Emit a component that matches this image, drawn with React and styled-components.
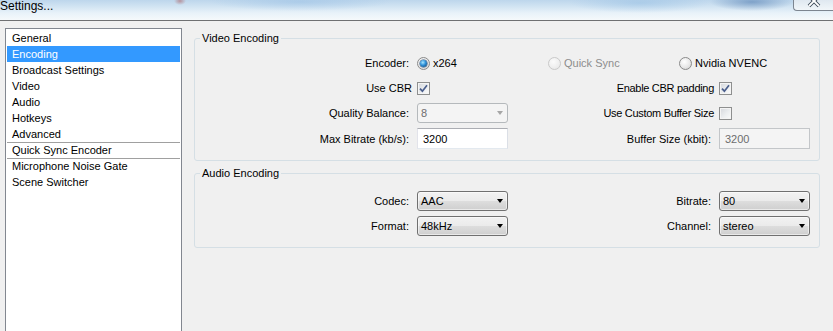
import React from "react";
import styled, { createGlobalStyle, css } from "styled-components";

const Global = createGlobalStyle`
  html, body { margin: 0; padding: 0; background: #f0f0f0; overflow: hidden; }
  body { font-family: "Liberation Sans", Arial, sans-serif; font-size: 11px; color: #000; }
  * { box-sizing: border-box; }
`;

const Window = styled.div`
  width: 833px;
  height: 331px;
  display: flex;
  flex-direction: column;
  background: #f0f0f0;
  overflow: hidden;
`;

const TitleBar = styled.div`
  flex: none;
  height: 21px;
  display: flex;
  align-items: flex-start;
  border-bottom: 1px solid #6f7072;
  background:
    radial-gradient(ellipse 42px 9px at 752px 2px, rgba(70, 115, 170, 0.55), transparent 100%),
    radial-gradient(ellipse 70px 10px at 640px 3px, rgba(140, 185, 225, 0.45), transparent 100%),
    radial-gradient(ellipse 90px 9px at 300px 2px, rgba(150, 190, 228, 0.5), transparent 100%),
    radial-gradient(ellipse 6px 4px at 180px 1px, rgba(170, 80, 80, 0.5), transparent 100%),
    linear-gradient(180deg, #bdd6ec 0%, #d3e5f3 35%, #e8f2f9 65%, #f5f9fb 100%);
`;

const Title = styled.span`
  font-size: 12px;
  line-height: 13px;
  color: #000;
  white-space: nowrap;
`;

const CloseButton = styled.div`
  margin-left: auto;
  width: 40px;
  height: 11px;
  display: flex;
  justify-content: center;
  align-items: flex-end;
  border-left: 1px solid #7c8590;
  border-bottom: 1px solid #7c8590;
  border-bottom-left-radius: 4px;
  background: linear-gradient(180deg, #dfe8f0 0%, #f1f6f9 100%);
  overflow: hidden;
`;

const Body = styled.div`
  flex: 1;
  min-height: 0;
  display: flex;
  align-items: flex-start;
  gap: 12px;
  padding: 7px 0 0 5px;
`;

const ListBox = styled.ul`
  list-style: none;
  margin: 0;
  flex: none;
  width: 177px;
  height: 320px;
  padding: 1px;
  background: #fff;
  border: 1px solid #828790;
`;

const ListItem = styled.li`
  height: 16px;
  line-height: 16px;
  padding-left: 5px;
  white-space: nowrap;
  ${(p) =>
    p.$selected &&
    css`
      background: #3399ff;
      color: #fff;
    `}
  ${(p) =>
    p.$divider &&
    css`
      border-top: 1px solid #a0a0a0;
      line-height: 15px;
    `}
`;

const Main = styled.div`
  flex: none;
  width: 626px;
  margin-top: 4px;
  display: flex;
  flex-direction: column;
  gap: 6px;
`;

const Group = styled.fieldset`
  margin: 0;
  min-width: 0;
  padding: ${(p) => p.$padTop}px 0 11px 0;
  border: 1px solid #d5dfe5;
  border-radius: 3px;
`;

const Legend = styled.legend`
  margin-left: 5px;
  padding: 0 2px;
  font-size: 11px;
  line-height: 12px;
`;

const FormGrid = styled.div`
  display: grid;
  grid-template-columns: 214px 91px 195px 91px;
  grid-template-rows: ${(p) => p.$rows};
  column-gap: 8px;
  row-gap: 5px;
  align-items: center;
`;

const Label = styled.span`
  justify-self: end;
  white-space: nowrap;
  color: #000;
  letter-spacing: ${(p) => (p.$narrow ? "-0.3px" : "0")};
  margin-right: ${(p) => (p.$tight ? "-3px" : "0")};
`;

const RadioGroup = styled.div`
  grid-column: 2 / -1;
  display: grid;
  grid-template-columns: repeat(3, 131px);
  align-items: center;
`;

const RadioOption = styled.span`
  display: flex;
  align-items: center;
  gap: 3px;
  white-space: nowrap;
  color: ${(p) => (p.$disabled ? "#8d8d8d" : "#000")};
`;

const RadioCircle = styled.span`
  flex: none;
  width: 13px;
  height: 13px;
  border-radius: 50%;
  display: flex;
  align-items: center;
  justify-content: center;
  border: 1px solid ${(p) => (p.$disabled ? "#c9c9c9" : "#8a8a8a")};
  background: ${(p) =>
    p.$disabled
      ? "radial-gradient(circle at 40% 35%, #fbfbfb 0%, #eeeeee 60%, #e2e2e2 100%)"
      : "radial-gradient(circle at 40% 35%, #ffffff 0%, #e8e8e8 55%, #cdcdcd 100%)"};
  &::after {
    content: "";
    display: ${(p) => (p.$checked ? "block" : "none")};
    width: 7px;
    height: 7px;
    border-radius: 50%;
    background: radial-gradient(circle at 40% 35%, #a8e6ff 0%, #2d8fd8 45%, #0d3a66 100%);
    box-shadow: 0 0 0 0.5px #2b4f75;
  }
`;

const CheckBox = styled.span`
  flex: none;
  width: 13px;
  height: 13px;
  display: flex;
  align-items: center;
  justify-content: center;
  border: 1px solid #8e8f8f;
  background: linear-gradient(135deg, #d4d7dc 0%, #eceef0 55%, #fbfbfb 100%);
  box-shadow: inset 0 0 0 1px #f4f4f4;
`;

const Combo = styled.div`
  height: 20px;
  display: flex;
  align-items: center;
  justify-content: space-between;
  padding: 0 4px 0 3px;
  border: 1px solid ${(p) => (p.$disabled ? "#b5b9bc" : "#707070")};
  border-radius: 3px;
  white-space: nowrap;
  color: ${(p) => (p.$disabled ? "#6d6d6d" : "#000")};
  background: ${(p) =>
    p.$disabled
      ? "#f4f4f4"
      : "linear-gradient(180deg, #f2f2f2 0%, #ebebeb 48%, #dddddd 52%, #cfcfcf 100%)"};
  box-shadow: inset 0 0 0 1px ${(p) => (p.$disabled ? "transparent" : "rgba(255,255,255,0.55)")};
`;

const Arrow = styled.span`
  width: 0;
  height: 0;
  border-left: 3.5px solid transparent;
  border-right: 3.5px solid transparent;
  border-top: 4px solid ${(p) => (p.$disabled ? "#a6a6a6" : "#000")};
`;

const TextBox = styled.div`
  height: 21px;
  display: flex;
  align-items: center;
  padding-left: 5px;
  border: 1px solid;
  border-color: ${(p) =>
    p.$disabled ? "#c3c6c9" : "#abadb3 #dbdfe6 #e3e9ef #e2e3ea"};
  background: ${(p) => (p.$disabled ? "#f4f4f4" : "#fff")};
  color: ${(p) => (p.$disabled ? "#6d6d6d" : "#000")};
`;

const CheckMark = () => (
  <svg width="9" height="9" viewBox="0 0 9 9">
    <path d="M1 4.6 L3.4 7.2 L8 1.2" fill="none" stroke="#4a5e8c" strokeWidth="1.7" />
  </svg>
);

const Check = ({ checked }) => <CheckBox>{checked && <CheckMark />}</CheckBox>;

const Select = ({ value, disabled }) => (
  <Combo $disabled={disabled}>
    <span>{value}</span>
    <Arrow $disabled={disabled} />
  </Combo>
);

const CloseGlyph = () => (
  <svg width="14" height="9" viewBox="0 0 14 9" style={{ marginBottom: 2 }}>
    <path d="M2 -3 L12 7 M12 -3 L2 7" stroke="#3b4756" strokeWidth="3.6" />
    <path d="M2 -3 L12 7 M12 -3 L2 7" stroke="#ffffff" strokeWidth="1.8" />
  </svg>
);

const pages = [
  { name: "General" },
  { name: "Encoding", selected: true },
  { name: "Broadcast Settings" },
  { name: "Video" },
  { name: "Audio" },
  { name: "Hotkeys" },
  { name: "Advanced" },
  { name: "Quick Sync Encoder", divider: true },
  { name: "Microphone Noise Gate", divider: true },
  { name: "Scene Switcher" },
];

export default function App() {
  return (
    <Window>
      <Global />
      <TitleBar>
        <Title>Settings...</Title>
        <CloseButton>
          <CloseGlyph />
        </CloseButton>
      </TitleBar>
      <Body>
        <ListBox>
          {pages.map((p) => (
            <ListItem key={p.name} $selected={p.selected} $divider={p.divider}>
              {p.name}
            </ListItem>
          ))}
        </ListBox>
        <Main>
          <Group $padTop={9}>
            <Legend>Video Encoding</Legend>
            <FormGrid $rows="20px 20px 20px 21px">
              <Label>Encoder:</Label>
              <RadioGroup>
                <RadioOption>
                  <RadioCircle $checked />
                  x264
                </RadioOption>
                <RadioOption $disabled>
                  <RadioCircle $disabled />
                  Quick Sync
                </RadioOption>
                <RadioOption>
                  <RadioCircle />
                  Nvidia NVENC
                </RadioOption>
              </RadioGroup>

              <Label $tight>Use CBR</Label>
              <Check checked />
              <Label $tight $narrow>Enable CBR padding</Label>
              <Check checked />

              <Label>Quality Balance:</Label>
              <Select value="8" disabled />
              <Label $tight $narrow>Use Custom Buffer Size</Label>
              <Check />

              <Label>Max Bitrate (kb/s):</Label>
              <TextBox>3200</TextBox>
              <Label>Buffer Size (kbit):</Label>
              <TextBox $disabled>3200</TextBox>
            </FormGrid>
          </Group>

          <Group $padTop={12}>
            <Legend>Audio Encoding</Legend>
            <FormGrid $rows="20px 20px">
              <Label>Codec:</Label>
              <Select value="AAC" />
              <Label>Bitrate:</Label>
              <Select value="80" />

              <Label>Format:</Label>
              <Select value="48kHz" />
              <Label>Channel:</Label>
              <Select value="stereo" />
            </FormGrid>
          </Group>
        </Main>
      </Body>
    </Window>
  );
}
